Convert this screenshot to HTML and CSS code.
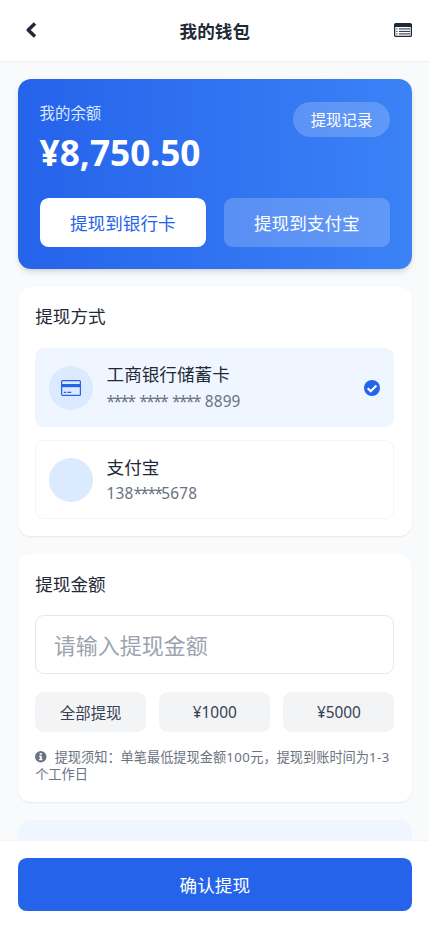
FILE: index.html
```html
<!DOCTYPE html>
<html lang="zh-CN">
<head>
<meta charset="UTF-8">
<meta name="viewport" content="width=device-width, initial-scale=1">
<title>我的钱包</title>
<link rel="stylesheet" href="styles.css">
</head>
<body>
<div class="app">
  <header class="header">
    <svg class="back" viewBox="0 0 12 18"><path d="M10 2.500L3.200 9l6.800 6.500" fill="none" stroke="currentColor" stroke-width="3.500" stroke-linejoin="round"/></svg>
    <h1>我的钱包</h1>
    <svg class="records" viewBox="0 0 18 14"><rect x=".65" y=".65" width="16.700" height="12.700" rx="1.200" fill="none" stroke="currentColor" stroke-width="1.300"/><path fill="currentColor" d="M.5 1h17v3H.5z"/><path stroke="currentColor" d="M2.300 5.900h1.200M5 5.900h11M2.300 8.400h1.200M5 8.400h11M2.300 10.900h1.200M5 10.900h11" stroke-width="1"/></svg>
  </header>
  <main class="main">
    <section class="balance">
      <div class="balance-top">
        <div><p class="label">我的余额</p><p class="amount">¥8,750.50</p></div>
        <button class="history">提现记录</button>
      </div>
      <div class="targets"><button class="bank">提现到银行卡</button><button class="alipay">提现到支付宝</button></div>
    </section>
    <section class="panel">
      <h2>提现方式</h2>
      <div class="method selected">
        <div class="avatar"><svg class="card-icon" viewBox="0 0 20 16"><rect x=".6" y=".6" width="18.800" height="14.800" rx="1" fill="none" stroke="currentColor" stroke-width="1.200"/><path fill="currentColor" d="M.5 4h19v3.200H.5z"/><path stroke="currentColor" stroke-width="1.300" d="M2.800 12.300h2.500M6.500 12.300h3.800"/></svg></div>
        <div class="info"><p class="name">工商银行储蓄卡</p><p class="number"><span class="mask">**** **** **** </span>8899</p></div>
        <svg class="check" viewBox="0 0 16 16"><circle cx="8" cy="8" r="8" fill="currentColor"/><path d="M3.700 8.200l3 3 5.700-5.700" fill="none" stroke="#fff" stroke-width="2.200"/></svg>
      </div>
      <div class="method">
        <div class="avatar"></div>
        <div class="info"><p class="name">支付宝</p><p class="number">138<span class="mask">****</span>5678</p></div>
      </div>
    </section>
    <section class="panel amount-panel">
      <h2>提现金额</h2>
      <input class="entry" type="text" placeholder="请输入提现金额">
      <div class="quick"><button>全部提现</button><button>¥1000</button><button>¥5000</button></div>
      <p class="notice"><svg viewBox="0 0 16 16"><circle cx="8" cy="8" r="8" fill="currentColor"/><path fill="#fff" d="M6.600 2.700h2.800v2.500H6.600zM5.800 6.500h3.700v4.600h1v1.800H5.700v-1.800h1V8.300h-.9z"/></svg>提现须知：单笔最低提现金额<span class="digits">100</span>元，提现到账时间为<span class="digits">1-3</span>个工作日</p>
    </section>
    <section class="tips"></section>
  </main>
  <footer class="footer"><button>确认提现</button></footer>
</div>
</body>
</html>
```
FILE: styles.css
```css
html { font-size: 17.6px; }
* { box-sizing: border-box; margin: 0; padding: 0; }
body {
  overflow: hidden;
  background: #f9fafb;
  color: #1f2937;
  font-family: "Noto Sans", "Noto Sans CJK SC", sans-serif;
}
button, input { border: 0; font: inherit; color: inherit; }
.app { width: 429.600px; height: 929px; display: flex; flex-direction: column; overflow: hidden; }
.header {
  flex: none;
  height: 61.4px;
  padding: 0 1rem;
  display: grid;
  grid-template-columns: 1fr auto 1fr;
  align-items: center;
  background: #fff;
  box-shadow: 0 1px 2px rgba(0, 0, 0, .06);
}
.header h1 { font-size: 1rem; line-height: 1.5; font-weight: 700; }
.back { width: 12px; height: 18px; margin: 0 0 2px 7.500px; }
.records { width: 18px; height: 14px; justify-self: end; margin-bottom: 1px; }
.main { flex: 1; min-height: 0; overflow: hidden; padding: 17.8px 1rem 0; }
.balance {
  height: 189.500px;
  padding: 22.400px 1.25rem 0;
  color: #fff;
  border-radius: .75rem;
  background: linear-gradient(90deg, #2563eb, #3b82f6);
  box-shadow: 0 4px 7px -1px rgba(0, 0, 0, .12), 0 2px 4px -2px rgba(0, 0, 0, .1);
}
.balance-top { display: flex; justify-content: space-between; align-items: flex-start; height: 96.800px; }
.label { font-size: .875rem; line-height: 23px; color: #dbeafe; }
.amount { font-size: 2rem; line-height: 54px; font-weight: 700; }
.history {
  width: 97px;
  height: 35px;
  font-size: .875rem;
  border-radius: 18px;
  background: rgba(255, 255, 255, .2);
}
.targets { display: grid; grid-template-columns: 1fr 1fr; gap: 1rem; }
.targets button { height: 48.400px; border-radius: .5rem; }
.targets .bank { background: #fff; color: #2563eb; }
.targets .alipay { background: rgba(255, 255, 255, .2); }
.panel {
  height: 249.400px;
  margin-top: 18px;
  padding: 1rem;
  border-radius: .75rem;
  background: #fff;
  box-shadow: 0 1px 2px rgba(0, 0, 0, .07);
}
.panel h2 { height: 26.400px; line-height: 25.400px; font-size: 1rem; font-weight: 400; }
.method {
  height: 79px;
  margin-top: 13px;
  padding: 0 13.200px;
  display: flex;
  align-items: center;
  gap: 13.200px;
  border: 1px solid #f3f4f6;
  border-radius: .5rem;
}
.selected { margin-top: 17.6px; background: #eff6ff; border-color: #eff6ff; }
.avatar {
  width: 44px;
  height: 44px;
  border-radius: 50%;
  display: grid;
  place-items: center;
  background: #dbeafe;
  color: #2563eb;
}
.card-icon { width: 20px; height: 16px; }
.info { flex: 1; }
.name { line-height: 28px; }
.number { font-size: .875rem; line-height: 25px; color: #6b7280; letter-spacing: .15px; }
.selected .name { line-height: 27px; }
.selected .number { line-height: 27px; }
.mask { letter-spacing: -1.500px; word-spacing: 2.300px; }
.check { width: 16px; height: 16px; color: #2563eb; }
.amount-panel { height: 248px; }
.entry {
  display: block;
  width: 100%;
  height: 59px;
  margin-top: 17.300px;
  padding: 0 1rem;
  border: 1px solid #e5e7eb;
  border-radius: .5rem;
  background: #fff;
  font-size: 1.25rem;
}
.entry::placeholder { color: #9ca3af; opacity: 1; }
.quick { display: grid; grid-template-columns: repeat(3, 1fr); gap: .75rem; margin-top: 17.6px; }
.quick button { height: 39.600px; padding-top: 1px; border-radius: .5rem; background: #f3f4f6; color: #374151; font-size: .875rem; }
.notice { margin-top: 17.3px; font-size: .75rem; line-height: 17.6px; color: #6b7280; }
.notice svg { width: 11.500px; height: 11.500px; margin-right: 8px; vertical-align: -1px; }
.digits { letter-spacing: .5px; }
.tips { height: 120px; margin-top: 18px; border-radius: .75rem; background: #eff6ff; }
.footer { flex: none; height: 89.300px; padding: 1rem; border-top: 1px solid #f3f4f6; background: #fff; }
.footer button { width: 100%; height: 52.800px; padding-bottom: 1px; border-radius: .5rem; background: #2563eb; color: #fff; }
```
